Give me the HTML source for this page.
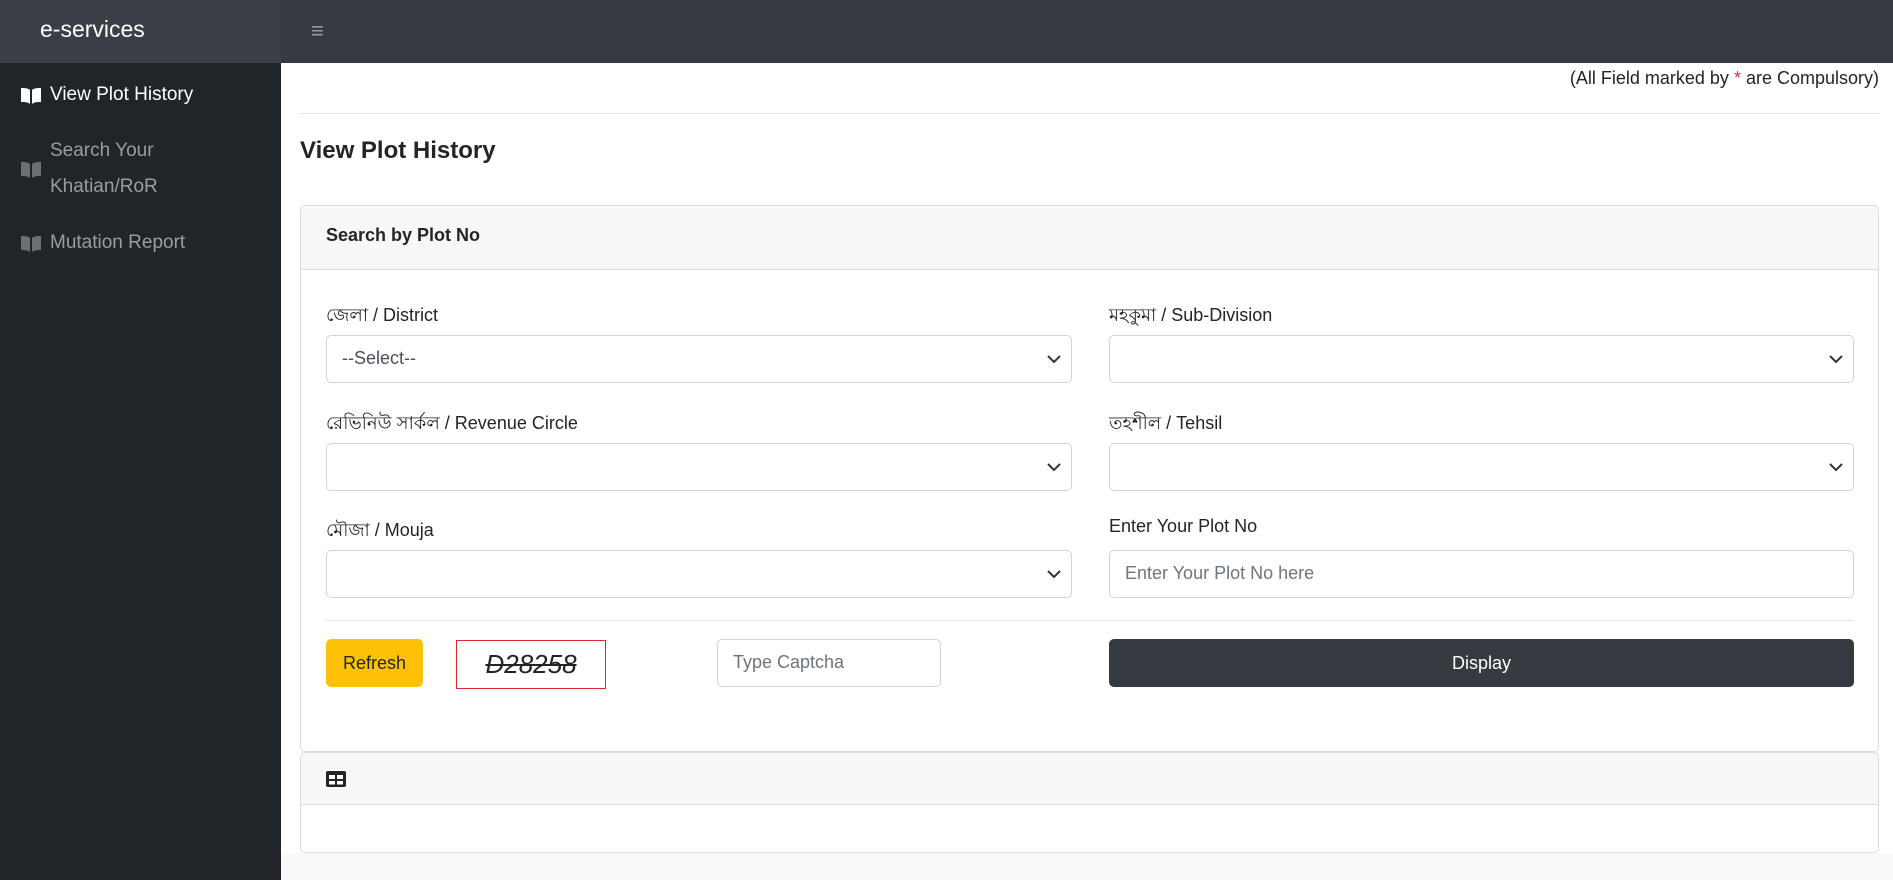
<!DOCTYPE html>
<html><head><meta charset="utf-8"><style>
*{box-sizing:border-box;margin:0;padding:0}
body{width:1893px;height:880px;overflow:hidden;background:#f8f9fa;font-family:"Liberation Sans","Noto Sans CJK SC",sans-serif;font-size:18px;color:#212529;position:relative}
.nav{position:absolute;left:0;top:0;width:1893px;height:63px;background:#343a40}
.brand{position:absolute;left:0;top:0;width:281px;height:63px;background:#3a3f46;color:#fff;font-size:23px;padding:16px 0 0 40px}
.burger{position:absolute;left:311px;top:18px;color:#999;font-size:22px}
.side{position:absolute;left:0;top:63px;width:281px;height:817px;background:#212529}
.si{position:absolute;left:20px;color:#9a9da0;font-size:19px;line-height:36px}
.si svg{position:absolute;left:0;top:10px}
.si span{display:block;margin-left:30px}
.main{position:absolute;left:281px;top:63px;width:1612px;height:790px;background:#fff}
.note{position:absolute;right:14px;top:5px;font-size:18px}
.hr1{position:absolute;left:19px;right:14px;top:50px;border-top:1px solid #e2e3e5}
h2{position:absolute;left:19px;top:74px;font-size:24px;font-weight:bold}
.card{position:absolute;left:19px;width:1579px;border:1px solid #dcdcdc;border-radius:5px;background:#fff;overflow:hidden}
.ch{background:#f7f7f7;border-bottom:1px solid #dcdcdc}
.lbl{position:absolute;font-size:18px}
.sel{position:absolute;height:48px;border:1px solid #ced4da;border-radius:5px;background:#fff;font-size:18px;color:#495057;padding:12px 15px}
.sel svg{position:absolute;right:10px;top:18px}
.btn{position:absolute;border-radius:5px;font-size:18px;text-align:center;line-height:48px;height:48px}
</style></head><body>
<div class="nav"><div class="brand">e-services</div><div class="burger">≡</div></div>
<div class="side">
<div class="si" style="top:14px;color:#fff"><svg width="22" height="18" viewBox="0 0 22 18"><path d="M1 1c3 0 7 0 9 2v14c-2-2-6-2-9-2z M12 3c2-2 6-2 9-2v14c-3 0-7 0-9 2z" fill="#fff"/></svg><span>View Plot History</span></div>
<div class="si" style="top:70px"><svg width="22" height="18" viewBox="0 0 22 18" style="top:28px"><path d="M1 1c3 0 7 0 9 2v14c-2-2-6-2-9-2z M12 3c2-2 6-2 9-2v14c-3 0-7 0-9 2z" fill="#6c7075"/></svg><span>Search Your<br>Khatian/RoR</span></div>
<div class="si" style="top:162px"><svg width="22" height="18" viewBox="0 0 22 18"><path d="M1 1c3 0 7 0 9 2v14c-2-2-6-2-9-2z M12 3c2-2 6-2 9-2v14c-3 0-7 0-9 2z" fill="#6c7075"/></svg><span>Mutation Report</span></div>
</div>
<div class="main">
<div class="note">(All Field marked by <span style="color:#dc3545">*</span> are Compulsory)</div>
<div class="hr1"></div>
<h2>View Plot History</h2>
<div class="card" style="top:142px;height:547px">
<div class="ch" style="height:64px;padding:19px 25px;font-weight:bold;font-size:18px">Search by Plot No</div>
<div class="lbl" style="left:25px;top:95px">জেলা / District</div>
<div class="sel" style="left:25px;top:129px;width:746px">--Select--<svg width="14" height="10"><path d="M1 2l6 6 6-6" stroke="#333" stroke-width="2" fill="none"/></svg></div>
<div class="lbl" style="left:808px;top:95px">মহকুমা / Sub-Division</div>
<div class="sel" style="left:808px;top:129px;width:745px"><svg width="14" height="10"><path d="M1 2l6 6 6-6" stroke="#333" stroke-width="2" fill="none"/></svg></div>
<div class="lbl" style="left:25px;top:203px">রেভিনিউ সার্কল / Revenue Circle</div>
<div class="sel" style="left:25px;top:237px;width:746px"><svg width="14" height="10"><path d="M1 2l6 6 6-6" stroke="#333" stroke-width="2" fill="none"/></svg></div>
<div class="lbl" style="left:808px;top:203px">তহশীল / Tehsil</div>
<div class="sel" style="left:808px;top:237px;width:745px"><svg width="14" height="10"><path d="M1 2l6 6 6-6" stroke="#333" stroke-width="2" fill="none"/></svg></div>
<div class="lbl" style="left:25px;top:310px">মৌজা / Mouja</div>
<div class="sel" style="left:25px;top:344px;width:746px"><svg width="14" height="10"><path d="M1 2l6 6 6-6" stroke="#333" stroke-width="2" fill="none"/></svg></div>
<div class="lbl" style="left:808px;top:310px">Enter Your Plot No</div>
<div class="sel" style="left:808px;top:344px;width:745px;color:#6c757d">Enter Your Plot No here</div>
<div style="position:absolute;left:25px;right:25px;top:414px;border-top:1px solid #e2e3e5"></div>
<div class="btn" style="left:25px;top:433px;width:97px;background:#ffc107">Refresh</div>
<div style="position:absolute;left:155px;top:434px;width:150px;height:49px;border:1px solid #d9282f;font-style:italic;font-size:26px;text-align:center;line-height:47px;text-decoration:line-through">D28258</div>
<div class="sel" style="left:416px;top:433px;width:224px;color:#6c757d">Type Captcha</div>
<div class="btn" style="left:808px;top:433px;width:745px;background:#343a40;color:#fff">Display</div>
</div>
<div class="card" style="top:689px;height:101px">
<div class="ch" style="height:52px;position:relative"><svg width="20" height="16" style="position:absolute;left:25px;top:18px" viewBox="0 0 20 16"><rect x="0" y="0" width="20" height="16" rx="2" fill="#212529"/><rect x="3" y="4" width="6" height="4" fill="#fff"/><rect x="11" y="4" width="6" height="4" fill="#fff"/><rect x="3" y="10" width="6" height="3.5" fill="#fff"/><rect x="11" y="10" width="6" height="3.5" fill="#fff"/></svg></div>
</div>
</div>
</body></html>
